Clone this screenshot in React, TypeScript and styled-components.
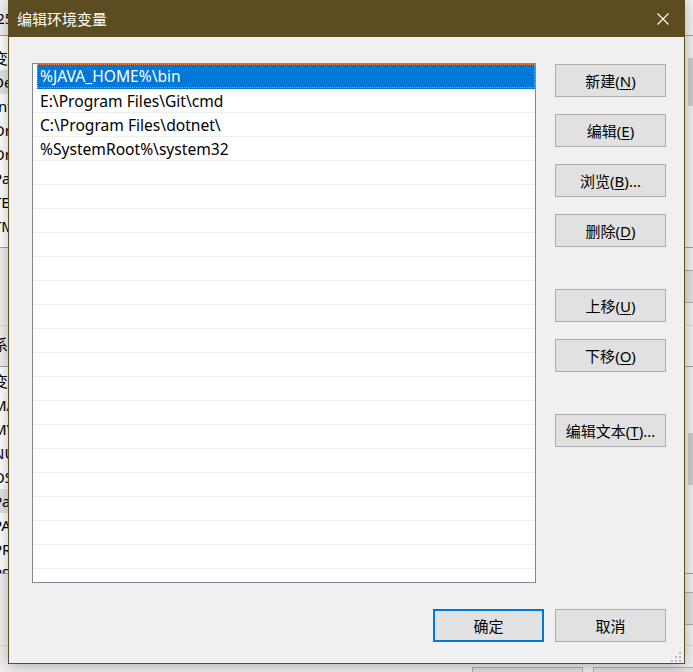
import React from "react";
import styled, { createGlobalStyle } from "styled-components";

const UI_FONT = `"Noto Sans", "Noto Sans CJK SC", sans-serif`;

const GlobalStyle = createGlobalStyle`
  html, body { margin: 0; padding: 0; width: 693px; height: 672px; overflow: hidden; background: #f0f0f0; }
  #root { width: 693px; height: 672px; }
  * { box-sizing: border-box; }
`;

const Stage = styled.div`
  position: relative;
  width: 693px;
  height: 672px;
  overflow: hidden;
  background: #f0f0f0;
  font-family: ${UI_FONT};
  font-size: 15px;
  color: #000;
`;

/* ---------- background window (peeks out around the dialog) ---------- */

const BackWindow = styled.div`
  position: absolute;
  inset: 0;
  display: flex;
  flex-direction: column;
  background: #f0f0f0;
  overflow: hidden;
`;

const BackTitle = styled.div`
  height: 36px;
  flex: none;
  border-bottom: 1px solid #a0a0a0;
  padding-top: 8px;
  line-height: 20px;
  white-space: nowrap;
  overflow: hidden;
`;

const Clip = styled.span<{ $shift: number }>`
  display: inline-block;
  margin-left: ${(p) => p.$shift}px;
`;

const BackList = styled.div<{ $h: number }>`
  height: ${(p) => p.$h}px;
  flex: none;
  background: #fff;
  border-bottom: 1px solid #a0a0a0;
  display: flex;
`;

const BackListBody = styled.div<{ $pt: number }>`
  flex: 1;
  overflow: hidden;
  padding-top: ${(p) => p.$pt}px;
`;

const BackRow = styled.div<{ $sel?: boolean }>`
  height: 24px;
  line-height: 24px;
  white-space: nowrap;
  background: ${(p) => (p.$sel ? "#e5e5e5" : "transparent")};
`;

const ScrollTrack = styled.div<{ $thumbTop: number; $thumbH: number }>`
  width: 8px;
  background: #f0f0f0;
  padding-top: ${(p) => p.$thumbTop}px;
  padding-left: 3px;
  &::before {
    content: "";
    display: block;
    width: 5px;
    height: ${(p) => p.$thumbH}px;
    background: #cdcdcd;
  }
`;

const BackGap = styled.div<{ $h: number }>`
  height: ${(p) => p.$h}px;
  flex: none;
  border-bottom: 1px solid #a0a0a0;
  display: flex;
  flex-direction: column;
  overflow: hidden;
`;

const BackButtonRow = styled.div<{ $mt: number }>`
  margin-top: ${(p) => p.$mt}px;
  display: flex;
  justify-content: flex-end;
  gap: 10px;
  margin-right: -11px;
  flex: none;
`;

const BackButton = styled.div`
  width: 111px;
  height: 33px;
  background: #e1e1e1;
  border: 1px solid #adadad;
`;

const BackLabel = styled.div`
  margin-top: 22px;
  border-top: 1px solid #dcdcdc;
  height: 40px;
  line-height: 36px;
  white-space: nowrap;
  overflow: hidden;
  flex: none;
`;

const BackFooter = styled.div`
  flex: 1 1 auto;
  min-height: 0;
  display: flex;
  flex-direction: column;
  overflow: hidden;
`;

const BackRule = styled.div`
  margin-top: 20px;
  height: 1px;
  flex: none;
  background: #dcdcdc;
`;

/* ---------- dialog ---------- */

const Dialog = styled.div`
  position: absolute;
  left: 8px;
  top: 0;
  width: 677px;
  height: 664px;
  border: 1px solid #5b4d1f;
  border-top: none;
  background: #f0f0f0;
  display: flex;
  flex-direction: column;
  box-shadow: 0 2px 14px rgba(0, 0, 0, 0.28);
`;

const TitleBar = styled.div`
  height: 37px;
  flex: none;
  background: #5b4d1f;
  display: flex;
  align-items: center;
  justify-content: space-between;
  padding-left: 8px;
  color: #fff;
  font-size: 15px;
`;

const TitleText = styled.span`
  line-height: 20px;
  padding-top: 1px;
`;

const CloseButton = styled.div`
  width: 42px;
  height: 37px;
  display: flex;
  align-items: center;
  justify-content: center;
  padding-top: 1px;
`;

const Body = styled.div`
  flex: 1;
  display: grid;
  grid-template-columns: 504px 111px;
  grid-template-rows: 520px 33px;
  column-gap: 19px;
  row-gap: 26px;
  padding: 26px 18px 21px 23px;
`;

const ListBox = styled.div`
  border: 1px solid #828790;
  background: #fff;
  overflow: hidden;
`;

const Row = styled.div<{ $first?: boolean }>`
  height: 24px;
  border-top: ${(p) => (p.$first ? "none" : "1px solid #efefef")};
  padding-left: 4px;
  display: flex;
`;

const Item = styled.div<{ $selected?: boolean }>`
  flex: 1;
  position: relative;
  z-index: 1;
  padding-left: 3px;
  font-size: 15.6px;
  line-height: 24px;
  white-space: nowrap;
  color: ${(p) => (p.$selected ? "#fff" : "#000")};
  background: ${(p) => (p.$selected ? "#0078d7" : "transparent")};
  box-shadow: ${(p) => (p.$selected ? "0 1px 0 #0078d7" : "none")};
  outline: ${(p) => (p.$selected ? "1px dotted #ff8a3d" : "none")};
  outline-offset: -1px;
`;

const ButtonColumn = styled.div`
  display: flex;
  flex-direction: column;
  padding-top: 1px;
`;

const Button = styled.div<{ $default?: boolean; $gap?: number }>`
  width: 111px;
  height: 33px;
  flex: none;
  margin-top: ${(p) => p.$gap ?? 0}px;
  background: #e1e1e1;
  border: ${(p) => (p.$default ? "2px solid #0078d7" : "1px solid #adadad")};
  display: flex;
  align-items: center;
  justify-content: center;
  font-size: 15px;
  line-height: 20px;
  color: #000;
  white-space: nowrap;
  u {
    text-decoration: underline;
    text-underline-offset: 2px;
  }
`;

const Footer = styled.div`
  grid-column: 1 / span 2;
  display: flex;
  justify-content: flex-end;
  gap: 11px;
`;

const Grip = styled.svg`
  position: absolute;
  right: 3px;
  bottom: 1px;
`;

const paths = [
  "%JAVA_HOME%\\bin",
  "E:\\Program Files\\Git\\cmd",
  "C:\\Program Files\\dotnet\\",
  "%SystemRoot%\\system32",
];

const userVars = ["变量", "Develop", "Intel", "OneDrive", "OneDriveConsumer", "Path", "TEMP", "TMP", "'"];
const sysVars = [
  "变量",
  "MAVEN_HOME",
  "MYSQL_HOME",
  "NUMBER_OF_PROCESSORS",
  "OS",
  "Path",
  "PATHEXT",
  "PROCESSOR_ARCHITECTURE",
  "PSModulePath",
];

const sideButtons: { label: string; key: string; tail?: string; gap: number }[] = [
  { label: "新建", key: "N", gap: 0 },
  { label: "编辑", key: "E", gap: 17 },
  { label: "浏览", key: "B", tail: "...", gap: 17 },
  { label: "删除", key: "D", gap: 17 },
  { label: "上移", key: "U", gap: 42 },
  { label: "下移", key: "O", gap: 17 },
  { label: "编辑文本", key: "T", tail: "...", gap: 42 },
];

export default function App() {
  const rows = Array.from({ length: 22 }, (_, i) => paths[i] ?? "");
  return (
    <Stage>
      <GlobalStyle />
      <BackWindow>
        <BackTitle>
          <Clip $shift={-21}>2025</Clip>
        </BackTitle>
        <BackList $h={212}>
          <BackListBody $pt={10}>
            {userVars.map((v, i) => (
              <BackRow key={i} $sel={i === 1}>
                <Clip $shift={-7}>{v}</Clip>
              </BackRow>
            ))}
          </BackListBody>
          <ScrollTrack $thumbTop={22} $thumbH={48} />
        </BackList>
        <BackGap $h={119}>
          <BackButtonRow $mt={22}>
            <BackButton />
          </BackButtonRow>
          <BackLabel>
            <Clip $shift={-7}>系统变量(S)</Clip>
          </BackLabel>
        </BackGap>
        <BackList $h={207}>
          <BackListBody $pt={2}>
            {sysVars.map((v, i) => (
              <BackRow key={i} $sel={i === 5}>
                <Clip $shift={-7}>{v}</Clip>
              </BackRow>
            ))}
          </BackListBody>
          <ScrollTrack $thumbTop={66} $thumbH={52} />
        </BackList>
        <BackFooter>
          <BackButtonRow $mt={18}>
            <BackButton />
          </BackButtonRow>
          <BackRule />
          <BackButtonRow $mt={21}>
            <BackButton />
            <BackButton />
          </BackButtonRow>
        </BackFooter>
      </BackWindow>

      <Dialog>
        <TitleBar>
          <TitleText>编辑环境变量</TitleText>
          <CloseButton>
            <svg width="12" height="12" viewBox="0 0 12 12">
              <path d="M0.5 0.5 L11.5 11.5 M11.5 0.5 L0.5 11.5" stroke="#fff" strokeWidth="1.1" fill="none" />
            </svg>
          </CloseButton>
        </TitleBar>
        <Body>
          <ListBox>
            {rows.map((p, i) => (
              <Row key={i} $first={i === 0}>
                <Item $selected={i === 0}>{p}</Item>
              </Row>
            ))}
          </ListBox>
          <ButtonColumn>
            {sideButtons.map((b) => (
              <Button key={b.key} $gap={b.gap}>
                {b.label}(<u>{b.key}</u>){b.tail ?? ""}
              </Button>
            ))}
          </ButtonColumn>
          <Footer>
            <Button $default>确定</Button>
            <Button>取消</Button>
          </Footer>
        </Body>
        <Grip width="12" height="12" viewBox="0 0 12 12">
          <g fill="#bababa">
            <rect x="10" y="2" width="2" height="2" />
            <rect x="6" y="6" width="2" height="2" />
            <rect x="10" y="6" width="2" height="2" />
            <rect x="2" y="10" width="2" height="2" />
            <rect x="6" y="10" width="2" height="2" />
            <rect x="10" y="10" width="2" height="2" />
          </g>
        </Grip>
      </Dialog>
    </Stage>
  );
}
